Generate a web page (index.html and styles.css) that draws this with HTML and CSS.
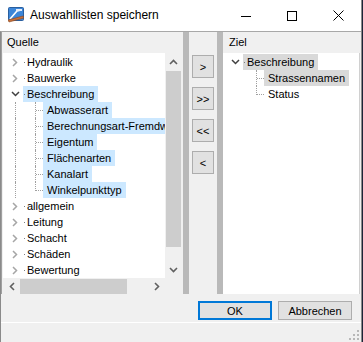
FILE: index.html
```html
<!DOCTYPE html>
<html lang="de">
<head>
  <meta charset="UTF-8">
  <title>Auswahllisten speichern</title>
  <link rel="stylesheet" href="styles.css">
</head>
<body>
  <div class="window">
    <div class="titlebar">
      <svg class="app-icon" width="16" height="16" viewBox="0 0 16 16">
        <rect x="0.5" y="0.5" width="15" height="13" rx="1" fill="#3d86d8" stroke="#2a5f9e"/>
        <path d="M2 12 L9 4 L13 3" stroke="#fff" stroke-width="1.6" fill="none"/>
        <rect x="8" y="2" width="6" height="2" fill="#e8eef8"/>
        <path d="M0 13 L15 9 L16 11 L1 15 Z" fill="#c8703a" stroke="#8a4820" stroke-width="0.6"/>
      </svg>
      <span class="title">Auswahllisten speichern</span>
      <div class="controls">
        <span class="ctl"><svg width="10" height="10"><path d="M0 5.5 H10" stroke="#000"/></svg></span>
        <span class="ctl"><svg width="10" height="10"><rect x="0.5" y="0.5" width="9" height="9" fill="none" stroke="#000"/></svg></span>
        <span class="ctl"><svg width="11" height="11"><path d="M0.5 0.5 L10.5 10.5 M10.5 0.5 L0.5 10.5" stroke="#000"/></svg></span>
      </div>
    </div>

    <div class="client">
      <div class="split">
        <div class="pane pane-left">
          <div class="pane-head">Quelle</div>
          <div class="tree-box">
            <div class="tree-main">
              <div class="viewport">
                <div class="node root"><i class="exp closed"></i><span class="label">Hydraulik</span></div>
                <div class="node root"><i class="exp closed"></i><span class="label">Bauwerke</span></div>
                <div class="node root"><i class="exp open"></i><span class="label sel">Beschreibung</span></div>
                <div class="node child"><i class="rail"></i><i class="elbow"></i><span class="label sel">Abwasserart</span></div>
                <div class="node child"><i class="rail"></i><i class="elbow"></i><span class="label sel">Berechnungsart-Fremdwasser</span></div>
                <div class="node child"><i class="rail"></i><i class="elbow"></i><span class="label sel">Eigentum</span></div>
                <div class="node child"><i class="rail"></i><i class="elbow"></i><span class="label sel">Flächenarten</span></div>
                <div class="node child"><i class="rail"></i><i class="elbow"></i><span class="label sel">Kanalart</span></div>
                <div class="node child"><i class="rail"></i><i class="elbow last"></i><span class="label sel">Winkelpunkttyp</span></div>
                <div class="node root"><i class="exp closed"></i><span class="label">allgemein</span></div>
                <div class="node root"><i class="exp closed"></i><span class="label">Leitung</span></div>
                <div class="node root"><i class="exp closed"></i><span class="label">Schacht</span></div>
                <div class="node root"><i class="exp closed"></i><span class="label">Schäden</span></div>
                <div class="node root"><i class="exp closed"></i><span class="label">Bewertung</span></div>
              </div>
              <div class="vscroll">
                <span class="arrow"><svg width="9" height="6"><path d="M1 5 L4.5 1.5 L8 5" stroke="#606060" stroke-width="1.6" fill="none"/></svg></span>
                <span class="track"><span class="vthumb"></span></span>
                <span class="arrow"><svg width="9" height="6"><path d="M1 1 L4.5 4.5 L8 1" stroke="#606060" stroke-width="1.6" fill="none"/></svg></span>
              </div>
            </div>
            <div class="tree-foot">
              <div class="hscroll">
                <span class="arrow"><svg width="6" height="9"><path d="M5 1 L1.5 4.5 L5 8" stroke="#606060" stroke-width="1.6" fill="none"/></svg></span>
                <span class="track"><span class="hthumb"></span></span>
                <span class="arrow"><svg width="6" height="9"><path d="M1 1 L4.5 4.5 L1 8" stroke="#606060" stroke-width="1.6" fill="none"/></svg></span>
              </div>
              <div class="corner"></div>
            </div>
          </div>
        </div>

        <div class="splitter"></div>

        <div class="mid">
          <button class="move">&gt;</button>
          <button class="move">&gt;&gt;</button>
          <button class="move">&lt;&lt;</button>
          <button class="move">&lt;</button>
        </div>

        <div class="splitter"></div>

        <div class="pane pane-right">
          <div class="pane-head">Ziel</div>
          <div class="tree-box">
            <div class="viewport">
              <div class="node root"><i class="exp open"></i><span class="label gray">Beschreibung</span></div>
              <div class="node child sub"><i class="elbow"></i><span class="label gray">Strassennamen</span></div>
              <div class="node child sub"><i class="elbow last"></i><span class="label">Status</span></div>
            </div>
          </div>
        </div>
      </div>

      <div class="actions">
        <button class="btn default">OK</button>
        <button class="btn">Abbrechen</button>
      </div>

      <div class="status">
        <svg class="grip" width="10" height="10">
          <g fill="#b8b8b8">
            <rect x="8" y="0" width="2" height="2"/>
            <rect x="4" y="4" width="2" height="2"/><rect x="8" y="4" width="2" height="2"/>
            <rect x="0" y="8" width="2" height="2"/><rect x="4" y="8" width="2" height="2"/><rect x="8" y="8" width="2" height="2"/>
          </g>
        </svg>
      </div>
    </div>
  </div>
</body>
</html>
```

FILE: styles.css
```css
body {
  margin: 0;
  background-color: #1c2438;
  font-family: 'Liberation Sans', Arial, sans-serif;
  font-size: 11px;
  color: #000;
}
.window {
  width: 361px;
  height: 342px;
  background-color: #f0f0f0;
  border-right: 1px solid #8a8a8a;
  display: flex;
  flex-direction: column;
}
.titlebar {
  height: 31px;
  background-color: #fff;
  display: flex;
  align-items: center;
  flex-shrink: 0;
}
.app-icon {
  margin-left: 8px;
  margin-right: 6px;
  margin-top: -2px;
}
.title {
  font-size: 12px;
  margin-top: -2px;
}
.controls {
  margin-left: auto;
  display: flex;
  height: 100%;
}
.ctl {
  width: 46px;
  display: flex;
  align-items: center;
  justify-content: center;
}
.client {
  flex: 1;
  display: flex;
  flex-direction: column;
  border-left: 1px solid #8a8a8a;
  border-top: 1px solid #a8a8a8;
}
.split {
  display: flex;
  height: 262px;
}
.pane {
  display: flex;
  flex-direction: column;
}
.pane-left {
  width: 180px;
  border-left: 1px solid #a0a0a0;
}
.pane-right {
  flex: 1;
}
.pane-head {
  height: 21px;
  line-height: 21px;
  padding-left: 5px;
}
.pane-right .pane-head {
  padding-left: 6px;
}
.tree-box {
  flex: 1;
  display: flex;
  flex-direction: column;
  background-color: #fff;
  margin-left: 1px;
}
.pane-right .tree-box {
  margin-left: 0;
  margin-right: 1px;
  border-right: 1px solid #d0d0d0;
}
.tree-main {
  flex: 1;
  display: flex;
}
.viewport {
  flex: 1;
  overflow: hidden;
  padding-top: 1px;
}
.node {
  height: 16px;
  display: flex;
  align-items: stretch;
  white-space: nowrap;
}
.node.root {
  padding-left: 4px;
}
.exp {
  width: 16px;
  flex-shrink: 0;
  background-repeat: no-repeat;
  background-position: center;
}
.exp.closed {
  background-image: url("data:image/svg+xml,%3Csvg xmlns='http://www.w3.org/2000/svg' width='6' height='9'%3E%3Cpath d='M1 1 L4.5 4.5 L1 8' stroke='%23a6a6a6' stroke-width='1.5' fill='none'/%3E%3C/svg%3E");
}
.exp.open {
  background-image: url("data:image/svg+xml,%3Csvg xmlns='http://www.w3.org/2000/svg' width='9' height='6'%3E%3Cpath d='M1 1 L4.5 4.5 L8 1' stroke='%23404040' stroke-width='1.5' fill='none'/%3E%3C/svg%3E");
}
.label {
  line-height: 16px;
  padding-right: 4px;
}
.label::before {
  content: "";
  display: inline-block;
  width: 1px;
  height: 1px;
  background-color: #808080;
  margin: 0 2px 0 1px;
  vertical-align: 3px;
}
.node.child .label::before {
  display: none;
}
.node.child .label {
  padding-left: 4px;
}
.sel {
  background-color: #cce8ff;
}
.gray {
  background-color: #d9d9d9;
}
.node.child {
  padding-left: 12px;
}
.node.child.sub {
  padding-left: 33px;
}
.rail {
  width: 19px;
  flex-shrink: 0;
  border-left: 1px dotted #a0a0a0;
}
.elbow {
  width: 7px;
  flex-shrink: 0;
  border-left: 1px dotted #a0a0a0;
  background: repeating-linear-gradient(90deg, #a0a0a0 0 1px, transparent 1px 2px) 0 8px / 100% 1px no-repeat;
}
.elbow.last {
  height: 9px;
}
.vscroll {
  width: 17px;
  display: flex;
  flex-direction: column;
  background-color: #f0f0f0;
}
.vscroll .arrow {
  height: 17px;
  display: flex;
  align-items: center;
  justify-content: center;
}
.vscroll .track {
  flex: 1;
  padding: 1px 1px;
}
.vthumb {
  display: block;
  height: 176px;
  background-color: #cdcdcd;
}
.tree-foot {
  height: 17px;
  display: flex;
}
.hscroll {
  flex: 1;
  display: flex;
  background-color: #f0f0f0;
}
.hscroll .arrow {
  width: 17px;
  display: flex;
  align-items: center;
  justify-content: center;
}
.hscroll .track {
  flex: 1;
  padding: 1px 0;
}
.hthumb {
  display: block;
  width: 107px;
  height: 100%;
  background-color: #cdcdcd;
}
.corner {
  width: 17px;
  background-color: #f0f0f0;
}
.splitter {
  width: 6px;
  background-color: #b9b9b9;
  flex-shrink: 0;
}
.pane-left + .splitter {
  margin-left: 1px;
}
.mid {
  width: 28px;
  display: flex;
  flex-direction: column;
  align-items: center;
  padding-top: 23px;
  gap: 9px;
}
.move {
  width: 22px;
  height: 23px;
  padding: 0;
  background-color: #e1e1e1;
  border: 1px solid #adadad;
  font-family: 'Liberation Sans', Arial, sans-serif;
  font-size: 11px;
  color: #000;
}
.actions {
  height: 28px;
  display: flex;
  justify-content: flex-end;
  align-items: flex-start;
  padding: 7px 9px 0 0;
  box-sizing: border-box;
  gap: 6px;
}
.btn {
  width: 74px;
  height: 19px;
  padding: 0;
  background-color: #e1e1e1;
  border: 1px solid #adadad;
  font-family: 'Liberation Sans', Arial, sans-serif;
  font-size: 11px;
  color: #000;
}
.btn.default {
  border: 2px solid #0078d7;
}
.status {
  flex: 1;
  border-top: 1px solid #fff;
  display: flex;
  justify-content: flex-end;
  align-items: flex-end;
  padding: 0 2px 2px 0;
}
```
